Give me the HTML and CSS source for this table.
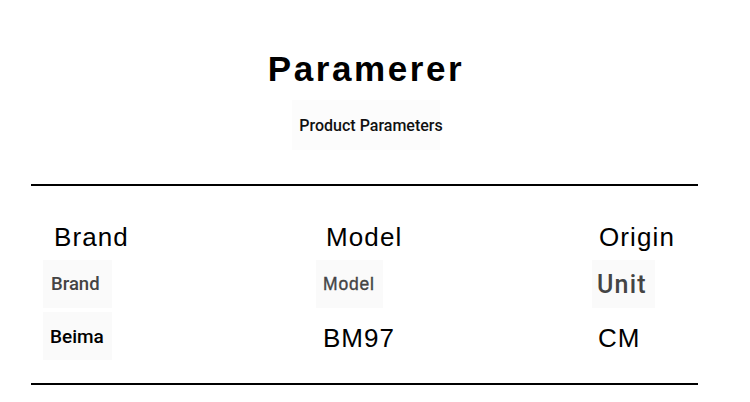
FILE: index.html
```html
<!DOCTYPE html>
<html lang="en">
<head>
<meta charset="utf-8">
<title>Paramerer</title>
<link rel="stylesheet" href="styles.css">
</head>
<body>
<header class="head">
  <h1 class="title">Paramerer</h1>
  <div class="subtitle">Product Parameters</div>
</header>
<section class="table">
  <div class="row row-head">
    <div class="cell c1"><span class="th">Brand</span></div>
    <div class="cell c2"><span class="th">Model</span></div>
    <div class="cell c3"><span class="th">Origin</span></div>
  </div>
  <div class="row row-mid">
    <div class="cell c1"><span class="box box1 label-r">Brand</span></div>
    <div class="cell c2"><span class="box box2 label-l">Model</span></div>
    <div class="cell c3"><span class="box box3 label-u">Unit</span></div>
  </div>
  <div class="row row-val">
    <div class="cell c1"><span class="box box1 val-r">Beima</span></div>
    <div class="cell c2"><span class="plain val-l">BM97</span></div>
    <div class="cell c3"><span class="plain val-l cm">CM</span></div>
  </div>
</section>
</body>
</html>
```

FILE: styles.css
```css
* { box-sizing: border-box; }
html, body { margin: 0; padding: 0; background: #ffffff; }
body { width: 750px; height: 402px; overflow: hidden; font-family: "Liberation Sans", Arial, sans-serif; color: #000; }

.head { display: flex; flex-direction: column; align-items: center; padding: 51px 18px 0 0; }
.title { margin: 0; font-family: "Liberation Sans", Arial, sans-serif; font-weight: 700; font-size: 35px; line-height: 35px; letter-spacing: 2.6px; color: #000; }
.subtitle { margin-top: 14px; width: 148px; height: 50px; background: #fcfcfc; display: flex; align-items: center; justify-content: center; font-family: Roboto, "Noto Sans", sans-serif; font-weight: 500; font-size: 16px; color: #111; padding-left: 10px; white-space: nowrap; }

.table { margin: 34px 52px 0 31px; border-top: 2px solid #000; border-bottom: 2px solid #000; padding: 0 0 23px 12px; }
.row { display: grid; grid-template-columns: 273px 276px 1fr; }
.row-head { padding-top: 38px; height: 74px; }
.row-mid { height: 48px; }
.row-val { margin-top: 4px; height: 48px; }

.cell { display: flex; align-items: center; }
.row-head .cell { align-items: flex-start; }
.row-head .c1 { padding-left: 11px; }
.row-head .c2 { padding-left: 10px; }
.row-head .c3 { padding-left: 7px; }

.th { font-size: 26px; line-height: 26px; letter-spacing: 1.1px; color: #000; }

.box { height: 48px; display: flex; align-items: center; background: #fafafa; white-space: nowrap; }
.box1 { width: 69px; padding-left: 8px; }
.box2 { width: 67px; padding-left: 7px; }
.box3 { width: 63px; padding-left: 5px; }

.label-r { font-family: Roboto, "Noto Sans", sans-serif; font-weight: 500; font-size: 18.5px; color: #444; }
.label-l { font-family: "Liberation Sans", Arial, sans-serif; font-size: 17.5px; color: #444; letter-spacing: 0.8px; -webkit-text-stroke: 0.35px #444; }
.label-u { font-family: Roboto, "Noto Sans", sans-serif; font-weight: 500; font-size: 25px; color: #444; letter-spacing: 1.2px; }

.val-r { font-family: Roboto, "Noto Sans", sans-serif; font-weight: 500; font-size: 19px; color: #000; padding-left: 7px; }
.plain { padding-left: 7px; }
.val-l { font-family: "Liberation Sans", Arial, sans-serif; font-size: 26px; color: #000; letter-spacing: 1px; padding-top: 4px; }
.cm { padding-left: 6px; }
```
